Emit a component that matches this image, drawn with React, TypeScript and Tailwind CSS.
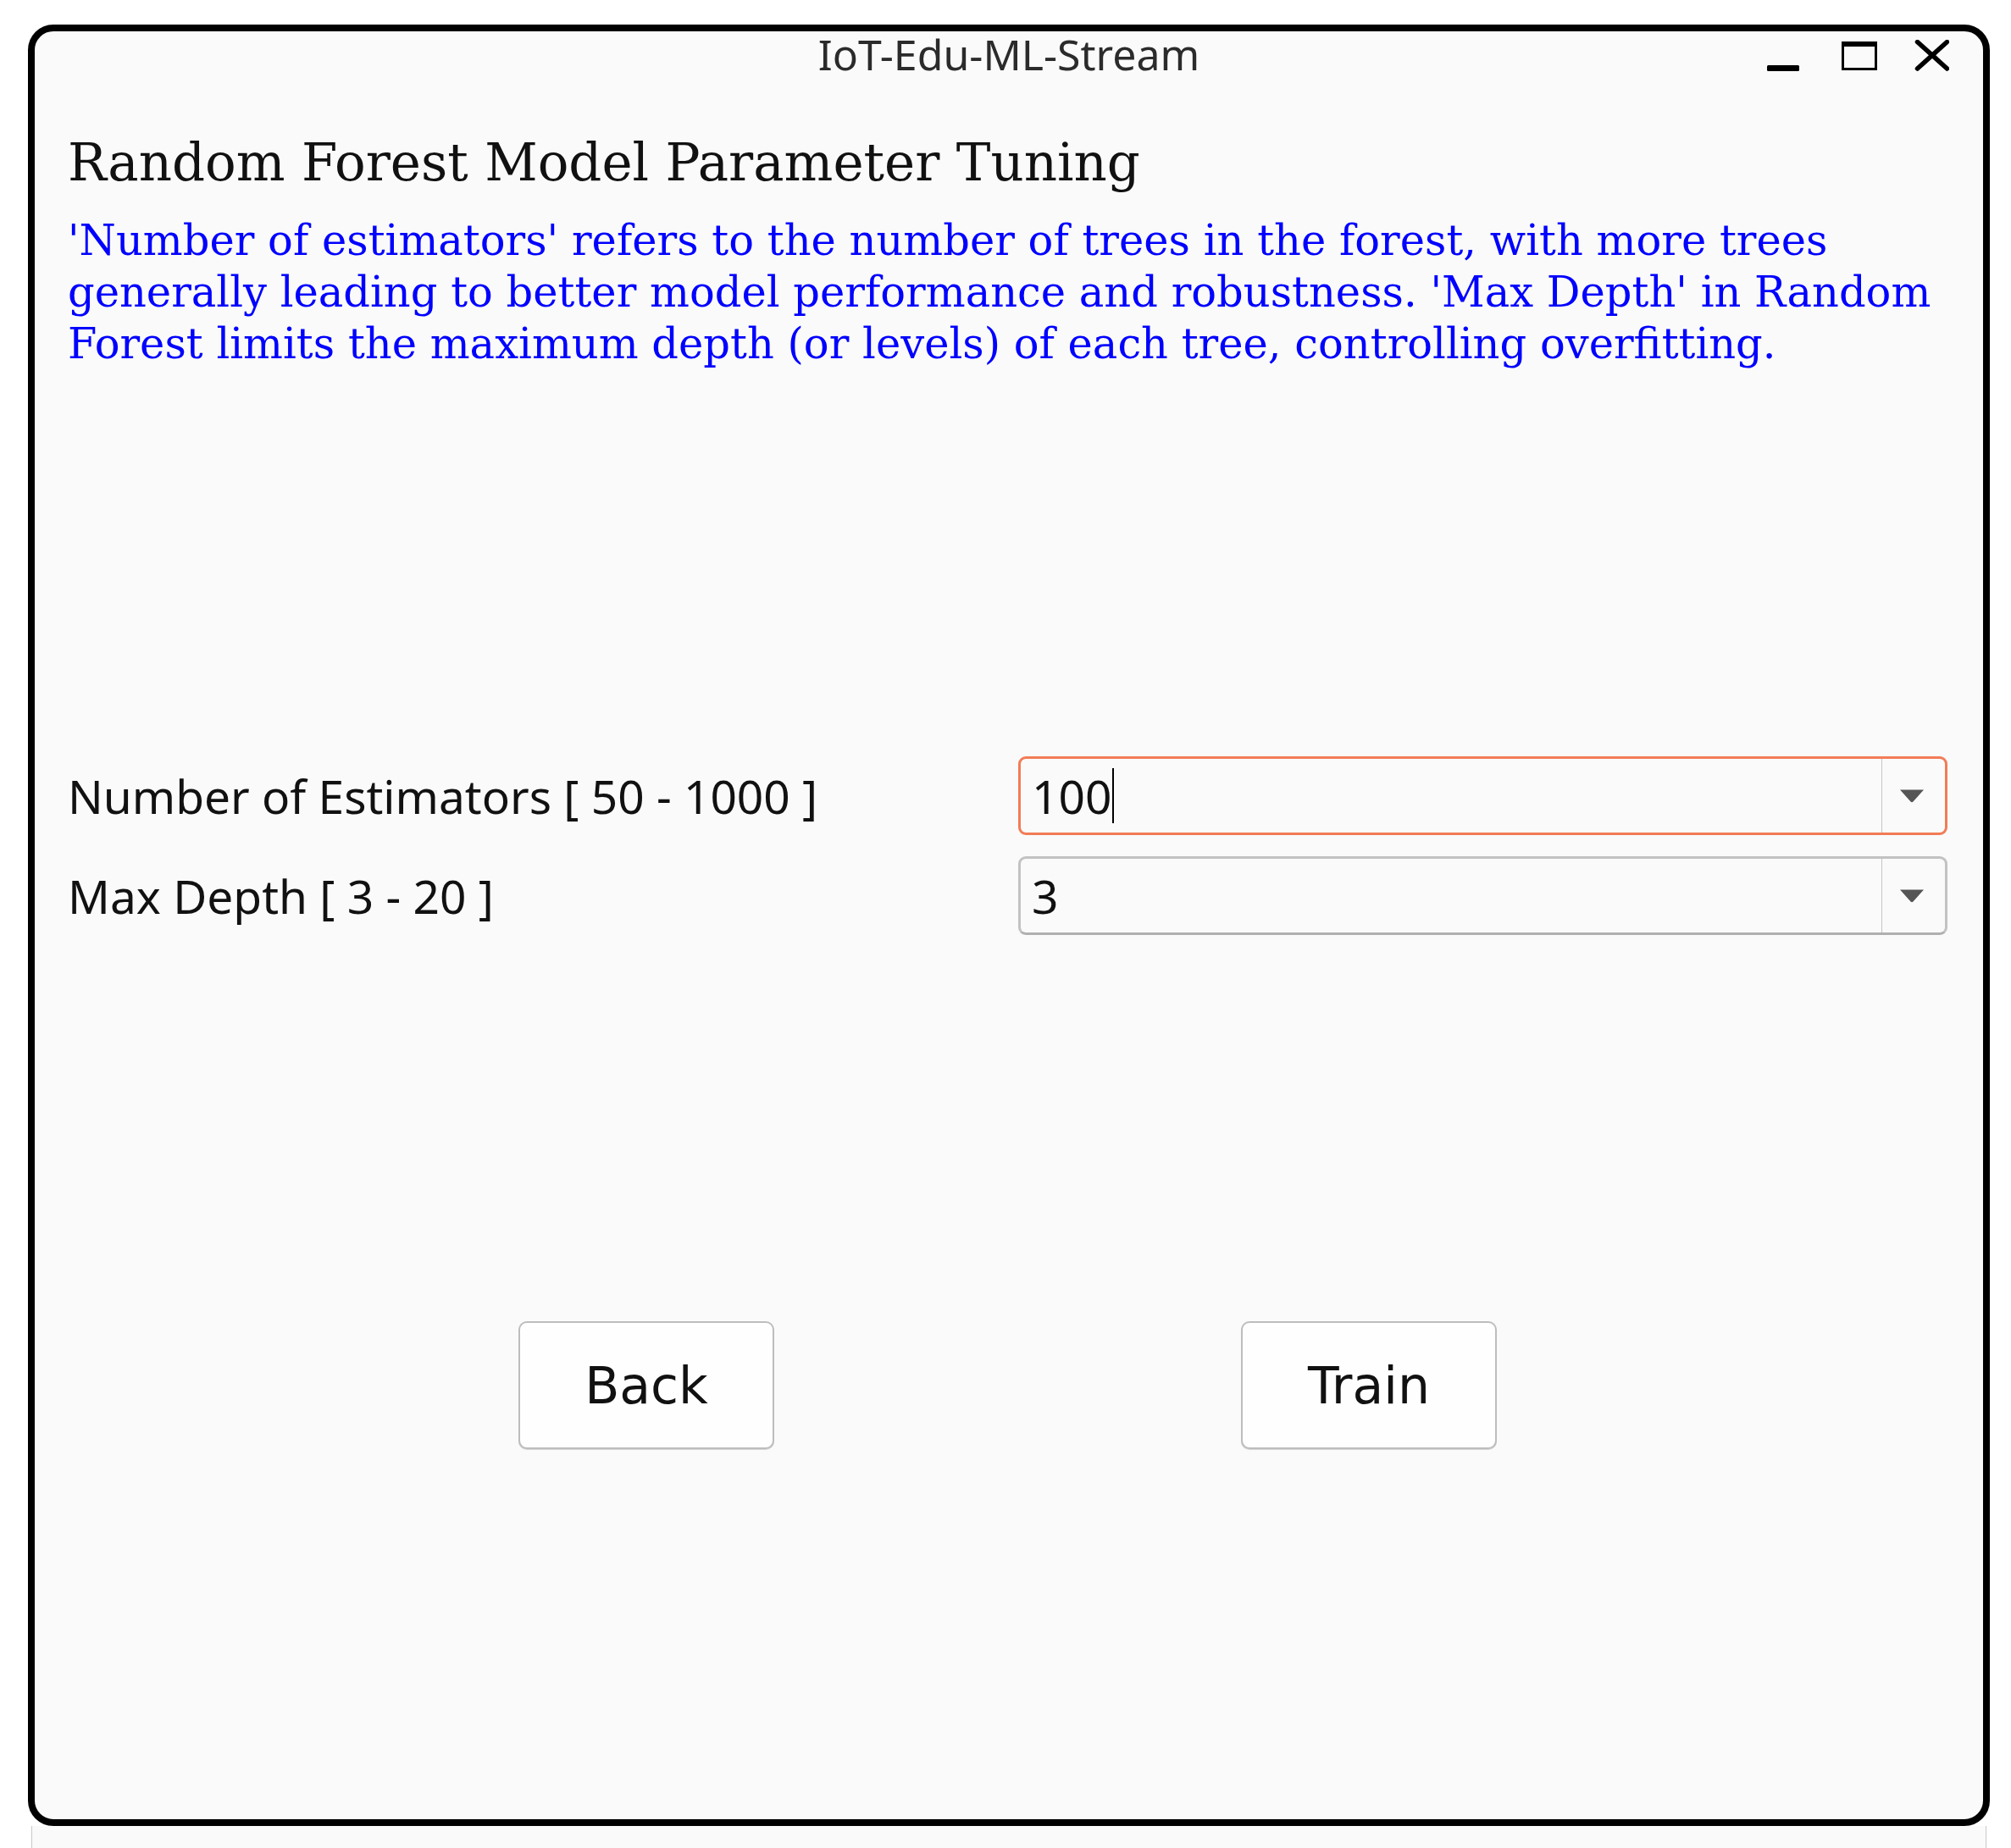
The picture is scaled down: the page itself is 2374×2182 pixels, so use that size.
import React from 'react';

const SANS = "font-['Noto_Sans',sans-serif]";
const SERIF = "font-['DejaVu_Serif',serif]";

function WindowControls() {
    return (
        <svg
            width="215"
            height="37"
            viewBox="0 0 215 37"
            className="absolute right-[40px] top-[10px]"
        >
            {/* minimize */}
            <rect x="0" y="30" width="38" height="7" rx="1.5" fill="#000" />
            {/* maximize */}
            <rect x="89.5" y="3.5" width="39" height="31" fill="none" stroke="#000" strokeWidth="3" />
            <rect x="88" y="2" width="42" height="6" fill="#000" />
            {/* close */}
            <line x1="177.5" y1="2.5" x2="212.5" y2="34" stroke="#000" strokeWidth="5.5" strokeLinecap="round" />
            <line x1="212.5" y1="2.5" x2="177.5" y2="34" stroke="#000" strokeWidth="5.5" strokeLinecap="round" />
        </svg>
    );
}

function ComboBox({ value, focused }: { value: string; focused?: boolean }) {
    return (
        <div
            className={`flex h-[93px] flex-1 rounded-[9px] bg-[#fafafa] ${
                focused
                    ? 'border-[3px] border-[#f27c56]'
                    : 'border-[3px] border-[#c2c2c2] border-b-[#b0b0b0]'
            }`}
        >
            <div className="flex flex-1 items-center pl-[13px]">
                <span className={`${SANS} text-[55px] leading-none text-[#111]`}>{value}</span>
                {focused && <span className="ml-[1px] h-[65px] w-[2px] bg-black" />}
            </div>
            <div className="flex w-[75px] items-center justify-center border-l border-[#c4c4c4] pr-[4px]">
                <svg width="30" height="17" viewBox="0 0 30 17">
                    <path d="M1 1.5 H29 L16.5 15.5 Q15 17 13.5 15.5 Z" fill="#555" />
                </svg>
            </div>
        </div>
    );
}

function Button({ label }: { label: string }) {
    return (
        <button className="flex h-[151px] w-[302px] items-center justify-center rounded-[10px] border-2 border-[#bdbdbd] bg-[#fefefe] shadow-[0_1px_0_#d6d6d6]">
            <span className="font-['DejaVu_Sans',sans-serif] text-[60px] leading-none text-[#111]">
                {label}
            </span>
        </button>
    );
}

export default function App() {
    return (
        <div className="h-[2182px] overflow-hidden bg-white pl-[33px] pt-[29px]">
            {/* Window */}
            <div className="flex h-[2127px] w-[2316px] flex-col rounded-[30px] border-[8px] border-black bg-[#fafafa]">
                {/* Title bar */}
                <div className="relative flex h-[60px] justify-center pt-[2px]">
                    <span className={`${SANS} text-[50px] leading-none text-[#2b2b2b]`}>
                        IoT-Edu-ML-Stream
                    </span>
                    <WindowControls />
                </div>

                <div className="flex flex-col pl-[39px] pr-[42px]">
                    <h1 className={`${SERIF} mt-[64px] whitespace-nowrap text-[61px] font-normal leading-[61px] text-[#111]`}>
                        Random Forest Model Parameter Tuning
                    </h1>
                    <p className={`${SERIF} mt-[32px] whitespace-nowrap text-[49.5px] leading-[61px] text-[#0000ff]`}>
                        'Number of estimators' refers to the number of trees in the forest, with more trees
                        <br />
                        generally leading to better model performance and robustness. 'Max Depth' in Random
                        <br />
                        Forest limits the maximum depth (or levels) of each tree, controlling overfitting.
                    </p>

                    {/* Parameters */}
                    <div className="mt-[456px] flex flex-col gap-[25px]">
                        <div className="flex items-center">
                            <span className={`${SANS} w-[1122px] text-[55px] leading-none text-[#111]`}>
                                Number of Estimators [ 50 - 1000 ]
                            </span>
                            <ComboBox value="100" focused />
                        </div>
                        <div className="flex items-center">
                            <span className={`${SANS} w-[1122px] text-[55px] leading-none text-[#111]`}>
                                Max Depth [ 3 - 20 ]
                            </span>
                            <ComboBox value="3" />
                        </div>
                    </div>

                    {/* Actions */}
                    <div className="mt-[456px] flex justify-center gap-[551px]">
                        <Button label="Back" />
                        <Button label="Train" />
                    </div>
                </div>
            </div>
            {/* Window background showing below the frame */}
            <div className="ml-[4px] h-[26px] w-[2308px] border-x border-[#c8c8c8] bg-[#fafafa]" />
        </div>
    );
}
